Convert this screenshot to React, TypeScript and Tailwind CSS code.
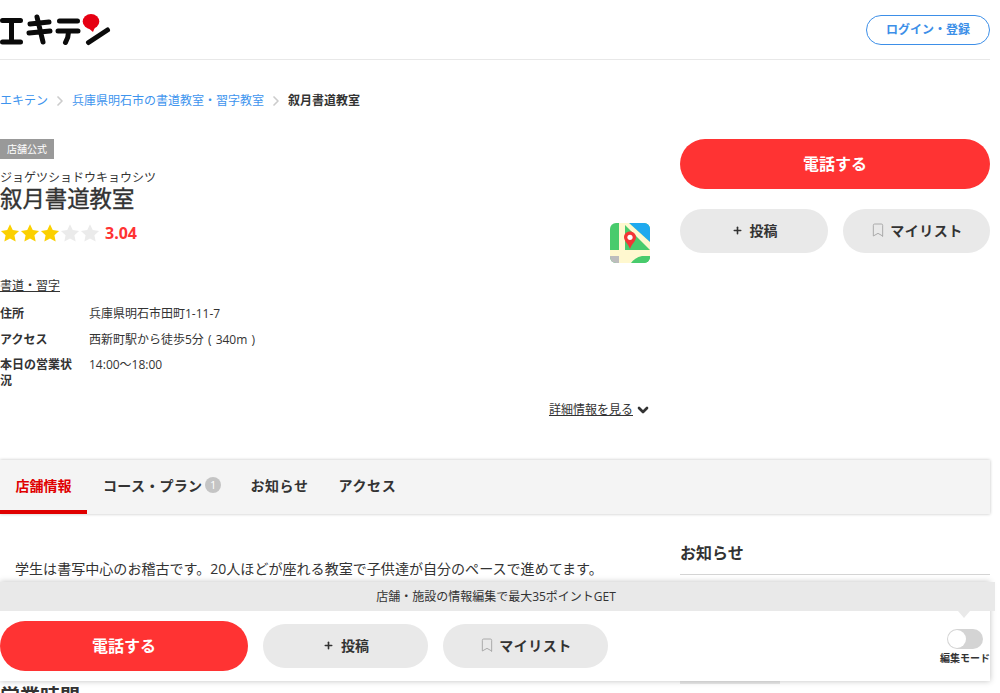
import { Bookmark, ChevronRight, ChevronDown, Plus } from "lucide-react";

const font = "font-['Open_Sans','Noto_Sans_CJK_JP',sans-serif]";

function Logo() {
  return (
    <svg width="112" height="46" viewBox="0 0 112 46" className="block">
      <g stroke="#0a0a0a" strokeWidth="5" strokeLinecap="round" fill="none">
        <path d="M2.5 20.5H20.5M11.5 20.5V42M2.5 42H20.5" />
        <path d="M30 24L49 22M29 33L50 31M37 17L43 42" />
        <path d="M59.5 21H77.5M58 31H78M68.5 32C68.5 36 67.5 39 65.5 42.5" />
        <path d="M88.5 42.5L107.5 30" />
      </g>
      <ellipse cx="91" cy="21.5" rx="8.3" ry="7.6" fill="#e60012" />
      <path d="M87 27L95 27L93 32Z" fill="#e60012" />
    </svg>
  );
}

function Star({ on }: { on: boolean }) {
  return (
    <svg width="20" height="20" viewBox="0 0 24 24">
      <path
        d="M12 1.5l3.3 7 7.6 1-5.6 5.2 1.5 7.6-6.8-3.8-6.8 3.8 1.5-7.6L1.1 9.5l7.6-1z"
        fill={on ? "#fbd000" : "#ebebeb"}
      />
    </svg>
  );
}

function MapIcon() {
  return (
    <svg width="40" height="40" viewBox="0 0 40 40" className="block">
      <clipPath id="map-clip">
        <rect width="40" height="40" rx="6" />
      </clipPath>
      <g clipPath="url(#map-clip)">
        <rect width="40" height="40" fill="#48cb6c" />
        <path d="M19 0H40V19Z" fill="#1fa9ef" />
        <path d="M13 0H19L40 19V27Z" fill="#fff8cf" />
        <rect x="9" width="6" height="40" fill="#fff8cf" />
        <rect y="27" width="40" height="6" fill="#fff8cf" />
        <rect y="33" width="9" height="7" fill="#bdbdbd" />
        <rect x="15" y="33" width="25" height="7" fill="#48cb6c" />
        <path d="M15 33H32C27 34 23 37 21 40H15Z" fill="#fff8cf" />
        <path d="M20 8.5C16.6 8.5 14 11 14 14.3C14 18 18 20.5 20 26C22 20.5 26 18 26 14.3C26 11 23.4 8.5 20 8.5Z" fill="#f33535" />
        <circle cx="20" cy="14.3" r="2.6" fill="#fff" />
      </g>
    </svg>
  );
}

function GrayPill({ className, children }: { className: string; children: React.ReactNode }) {
  return (
    <a className={`flex items-center justify-center rounded-full bg-[#e9e9e9] pb-[2px] text-[14px] font-bold text-[#333] ${className}`}>
      {children}
    </a>
  );
}

function PostLabel() {
  return (
    <>
      <Plus size={11} strokeWidth={3.5} className="mr-[8px] translate-x-[1px]" />
      投稿
    </>
  );
}

function ListLabel() {
  return (
    <>
      <Bookmark size={16} strokeWidth={1.5} className="mr-[4px] text-[#aaa]" />
      <span className="tracking-[0.5px]">マイリスト</span>
    </>
  );
}

const rows = [
  { label: "住所", value: "兵庫県明石市田町1-11-7", h: "h-[26px]" },
  { label: "アクセス", value: "西新町駅から徒歩5分 ( 340m )", h: "h-[25px]" },
  { label: "本日の営業状況", value: "14:00〜18:00", h: "" },
];

const tabs = [
  { label: "コース・プラン", count: 1, cls: "pl-[16px] pr-[14px] tracking-[0.3px]" },
  { label: "お知らせ", cls: "px-[15px] tracking-[0.6px]" },
  { label: "アクセス", cls: "px-[15px] tracking-[0.6px]" },
];

export default function App() {
  return (
    <div className={`relative h-[693px] w-[1000px] overflow-hidden bg-white text-[#333] ${font}`}>
      <div className="w-[990px]">
        <header className="flex h-[60px] items-start justify-between border-b border-[#e8e8e8]">
          <Logo />
          <a className="mt-[15px] flex h-[30px] w-[124px] items-center justify-center rounded-full border border-[#3d8fe8] text-[12px] font-semibold text-[#3d8fe8]">
            ログイン・登録
          </a>
        </header>

        <nav className="mt-[32px] flex h-[18px] items-center text-[12px] leading-[18px]">
          <a className="text-[#3d94ee]">エキテン</a>
          <ChevronRight size={16} strokeWidth={2.5} className="mx-[4px] text-[#ccc]" />
          <a className="text-[#3d94ee]">兵庫県明石市の書道教室・習字教室</a>
          <ChevronRight size={16} strokeWidth={2.5} className="mx-[4px] text-[#ccc]" />
          <span className="font-semibold">叙月書道教室</span>
        </nav>

        <div className="mt-[29px] flex h-[321px] gap-[30px]">
          <section className="relative w-[650px]">
            <span className="flex h-[20px] w-[54px] items-center justify-center bg-[#999] text-[10px] text-white">店舗公式</span>
            <p className="mt-[11px] text-[12px] leading-[16px]">ジョゲツショドウキョウシツ</p>
            <h1 className="text-[22.4px] font-normal leading-[26px] [-webkit-text-stroke:0.35px_#333]">叙月書道教室</h1>
            <div className="mt-[9px] flex h-[24px] items-center">
              {[1, 1, 1, 0, 0].map((on, i) => (
                <Star key={i} on={on === 1} />
              ))}
              <b className="ml-[5px] text-[16px] font-bold text-[#ff3333]">3.04</b>
            </div>
            <div className="absolute right-0 top-[84px]">
              <MapIcon />
            </div>
            <a className="mt-[32px] inline-block text-[12px] leading-[18px] underline">書道・習字</a>
            <dl className="mt-[10px] text-[12px] leading-[16px]">
              {rows.map((r) => (
                <div key={r.label} className={`flex ${r.h}`}>
                  <dt className="w-[89px] pr-[14px] font-semibold">{r.label}</dt>
                  <dd className="[word-spacing:1px]">{r.value}</dd>
                </div>
              ))}
            </dl>
            <a className="absolute -right-[1px] top-[262px] flex items-center text-[12px] leading-[18px]">
              <span className="underline">詳細情報を見る</span>
              <ChevronDown size={16} strokeWidth={4} className="ml-[2px]" />
            </a>
          </section>

          <aside className="w-[310px]">
            <a className="flex h-[50px] items-center justify-center rounded-full bg-[#ff3333] pb-[1px] text-[16px] font-bold text-white">電話する</a>
            <div className="mt-[20px] flex justify-between">
              <GrayPill className="h-[44px] w-[148px]"><PostLabel /></GrayPill>
              <GrayPill className="h-[44px] w-[147px]"><ListLabel /></GrayPill>
            </div>
          </aside>
        </div>

        <nav className="flex h-[54px] bg-[#f4f4f4] text-[14px] font-bold shadow-[0_0_3px_rgba(0,0,0,0.25)]">
          <a className="flex w-[87px] items-center justify-center border-b-4 border-[#e00000] text-[#e00000]">店舗情報</a>
          {tabs.map((t) => (
            <a key={t.label} className={`flex items-center pb-[4px] ${t.cls}`}>
              {t.label}
              {t.count ? (
                <span className="ml-[3px] flex h-[16px] w-[16px] items-center justify-center rounded-full bg-[#c4c4c4] text-[11px] font-normal text-white">{t.count}</span>
              ) : null}
            </a>
          ))}
        </nav>

        <div className="mt-[25px] flex gap-[30px]">
          <main className="w-[650px]">
            <p className="mt-[19px] pl-[15px] text-[14.05px] leading-[22px]">学生は書写中心のお稽古です。20人ほどが座れる教室で子供達が自分のペースで進めてます。</p>
            <h2 className="mt-[105px] text-[20px] font-bold leading-[24px]">営業時間</h2>
          </main>
          <aside className="w-[310px]">
            <h2 className="border-b border-[#d4d4d4] pb-[8px] pt-[1px] text-[16px] font-bold leading-[26px]">お知らせ</h2>
            <div className="mt-[105px] h-[4px] w-[100px] bg-[#e9e9e9]" />
          </aside>
        </div>
      </div>

      <div className="absolute left-0 top-[582px] w-[990px] bg-white shadow-[0_0_6px_rgba(0,0,0,0.25)]">
        <div className="relative flex h-[29px] w-[995px] items-center justify-center bg-[#e9e9e9] text-[12px]">
          <span className="-ml-[3px]">店舗・施設の情報編集で最大35ポイントGET</span>
          <span className="absolute left-[958px] top-[29px] h-0 w-0 border-x-[6px] border-t-[7px] border-x-transparent border-t-[#e9e9e9]" />
        </div>
        <div className="flex h-[70px] items-center">
          <a className="flex h-[50px] w-[248px] items-center justify-center rounded-full bg-[#ff3333] pb-[1px] text-[16px] font-bold text-white">電話する</a>
          <GrayPill className="ml-[15px] h-[44px] w-[165px]"><PostLabel /></GrayPill>
          <GrayPill className="ml-[15px] h-[44px] w-[165px]"><ListLabel /></GrayPill>
          <div className="ml-auto flex flex-col items-end">
            <span className="mr-[7px] mt-[3px] flex h-[20px] w-[36px] items-center rounded-full bg-[#d4d4d4] pl-[1px]">
              <span className="h-[18px] w-[18px] rounded-full bg-white" />
            </span>
            <span className="mt-[1px] text-[10px] font-bold leading-[16px]">編集モード</span>
          </div>
        </div>
      </div>
    </div>
  );
}
